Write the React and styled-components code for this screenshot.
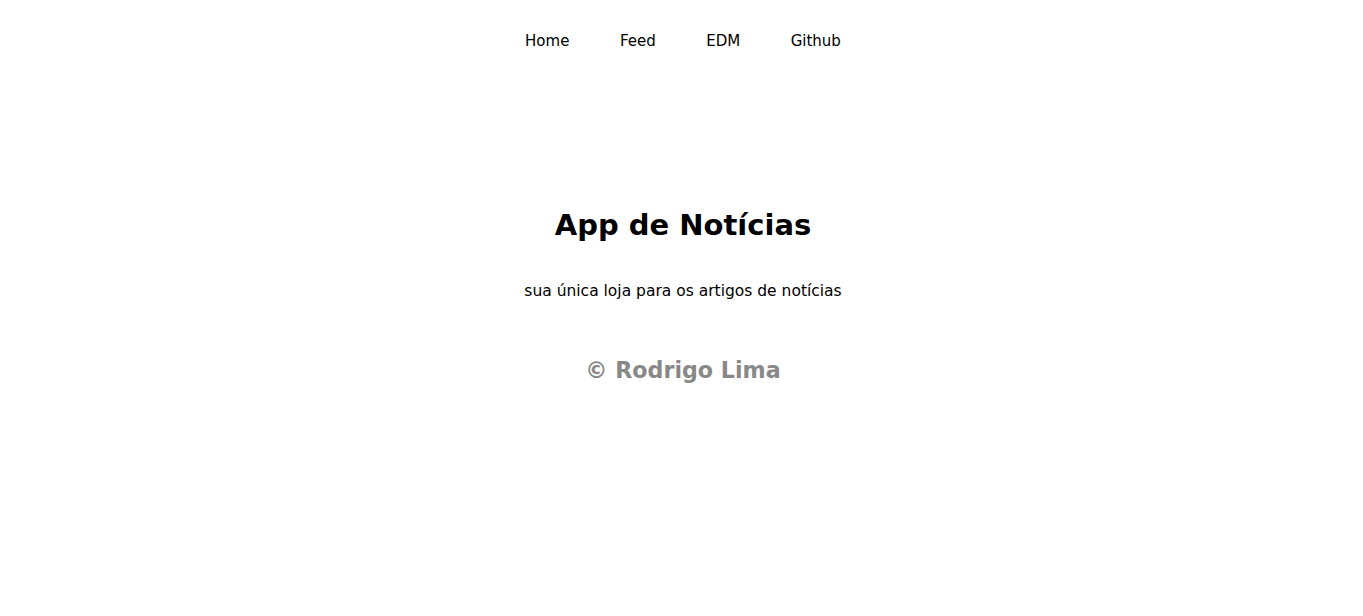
import React from "react";
import styled, { createGlobalStyle } from "styled-components";

const Global = createGlobalStyle`
  html, body { margin: 0; padding: 0; background: #fff; }
  body { font-family: "DejaVu Sans", "Liberation Sans", sans-serif; color: #000; }
`;

const Page = styled.div`
  display: flex;
  flex-direction: column;
  align-items: center;
  min-height: 616px;
`;

const Nav = styled.nav`
  display: flex;
  justify-content: center;
  gap: 50.5px;
  padding: 32px 0 29px;
  padding-left: 3px;
`;

const NavLink = styled.a`
  font-size: 15px;
  line-height: 19px;
  color: #000;
  text-decoration: none;
`;

const Main = styled.main`
  display: flex;
  flex-direction: column;
  align-items: center;
  padding-top: 126px;
  padding-left: 3px;
`;

const Title = styled.h1`
  margin: 0;
  font-size: 29px;
  line-height: 38px;
  font-weight: bold;
`;

const Subtitle = styled.p`
  margin: 38px 0 0;
  font-size: 15.5px;
  line-height: 19px;
`;

const Footer = styled.footer`
  margin-top: 55px;
  font-size: 22.2px;
  line-height: 29px;
  font-weight: bold;
  color: #888;
`;

export default function App() {
  return (
    <>
      <Global />
      <Page>
        <Nav>
          <NavLink href="#">Home</NavLink>
          <NavLink href="#">Feed</NavLink>
          <NavLink href="#">EDM</NavLink>
          <NavLink href="#">Github</NavLink>
        </Nav>
        <Main>
          <Title>App de Notícias</Title>
          <Subtitle>sua única loja para os artigos de notícias</Subtitle>
          <Footer>© Rodrigo Lima</Footer>
        </Main>
      </Page>
    </>
  );
}
